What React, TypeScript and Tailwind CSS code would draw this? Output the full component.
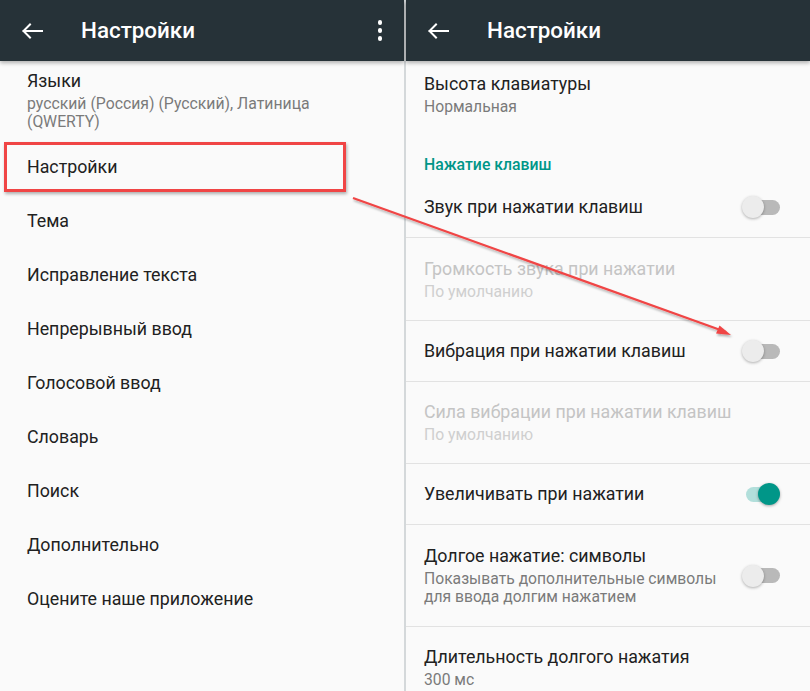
import React from 'react';

const font = { fontFamily: 'Roboto, "Noto Sans", sans-serif' };

const BackArrow = () => (
  <svg width="22" height="16" viewBox="0 0 22 16" className="shrink-0">
    <path d="M21 8H2.5M9 1.5L2.5 8 9 14.5" fill="none" stroke="#fff" strokeWidth="2" strokeLinecap="square" />
  </svg>
);

const Header = ({ menu }: { menu?: boolean }) => (
  <div className="relative z-10 h-[61px] bg-[#263238] flex items-center pl-[21px] pr-[22px] shadow-[0_2px_4px_rgba(0,0,0,0.3)]">
    <BackArrow />
    <span className="ml-[38px] text-[22.4px] font-medium text-white">Настройки</span>
    {menu && (
      <div className="ml-auto flex flex-col gap-[3.5px] items-center">
        <span className="w-[4.5px] h-[4.5px] rounded-full bg-white" />
        <span className="w-[4.5px] h-[4.5px] rounded-full bg-white" />
        <span className="w-[4.5px] h-[4.5px] rounded-full bg-white" />
      </div>
    )}
  </div>
);

const Switch = ({ on }: { on?: boolean }) =>
  on ? (
    <div className="relative w-[36px] h-[22px] flex items-center">
      <div className="ml-[2px] w-[30px] h-[15px] rounded-full bg-[#b2dfdb]" />
      <div className="absolute right-0 w-[22px] h-[22px] rounded-full bg-[#009688] shadow-[0_1px_3px_rgba(0,0,0,0.35)]" />
    </div>
  ) : (
    <div className="relative w-[38px] h-[22px] flex items-center">
      <div className="ml-[4px] w-[34px] h-[15px] rounded-full bg-[#b9b9b9]" />
      <div className="absolute left-0 w-[22px] h-[22px] rounded-full bg-[#ececec] shadow-[0_1px_3px_rgba(0,0,0,0.3)]" />
    </div>
  );

const LeftItem = ({ title }: { title: string }) => (
  <div className="h-[54px] flex items-center px-[27px] text-[17.8px] text-[#212121]">{title}</div>
);

type Row = { title: string; sub?: string[]; h: string; disabled?: boolean; sw?: 'on' | 'off' };

const rows: Row[] = [
  { title: 'Звук при нажатии клавиш', h: 'h-[61px]', sw: 'off' },
  { title: 'Громкость звука при нажатии', sub: ['По умолчанию'], h: 'h-[83px]', disabled: true },
  { title: 'Вибрация при нажатии клавиш', h: 'h-[61px]', sw: 'off' },
  { title: 'Сила вибрации при нажатии клавиш', sub: ['По умолчанию'], h: 'h-[82px]', disabled: true },
  { title: 'Увеличивать при нажатии', h: 'h-[61px]', sw: 'on' },
  {
    title: 'Долгое нажатие: символы',
    sub: ['Показывать дополнительные символы', 'для ввода долгим нажатием'],
    h: 'h-[102px]',
    sw: 'off',
  },
];

const RightRow = ({ r }: { r: Row }) => (
  <div className={`${r.h} border-b border-[#e2e2e2] flex items-center pl-[18px] pr-[30px]`}>
    <div className="flex-1 flex flex-col">
      <div className={`text-[17.8px] leading-[22px] ${r.disabled ? 'text-[#c4c4c4]' : 'text-[#212121]'}`}>{r.title}</div>
      {r.sub && (
        <div className={`mt-[3px] text-[15.7px] leading-[18px] ${r.disabled ? 'text-[#cfcfcf]' : 'text-[#7a7a7a]'}`}>
          {r.sub.map((s) => (
            <div key={s}>{s}</div>
          ))}
        </div>
      )}
    </div>
    {r.sw && <Switch on={r.sw === 'on'} />}
  </div>
);

export default function App() {
  return (
    <div className="relative w-[810px] h-[691px] overflow-hidden flex bg-[#fafafa]" style={font}>
      {/* Left panel */}
      <div className="w-[404px] flex flex-col">
        <Header menu />
        <div className="flex flex-col">
          <div className="h-[79px] px-[27px] pt-[9px]">
            <div className="text-[17.8px] leading-[22px] text-[#212121]">Языки</div>
            <div className="mt-[3px] text-[15.8px] leading-[18px] text-[#7a7a7a]">
              русский (Россия) (Русский), Латиница
              <br />
              (QWERTY)
            </div>
          </div>
          {[
            'Настройки',
            'Тема',
            'Исправление текста',
            'Непрерывный ввод',
            'Голосовой ввод',
            'Словарь',
            'Поиск',
            'Дополнительно',
            'Оцените наше приложение',
          ].map((t) => (
            <LeftItem key={t} title={t} />
          ))}
        </div>
      </div>

      <div className="w-[2px] bg-[#d4d8da]" />

      {/* Right panel */}
      <div className="flex-1 flex flex-col">
        <Header />
        <div className="h-[74px] pl-[18px] pt-[12px]">
          <div className="text-[17.8px] leading-[22px] text-[#212121]">Высота клавиатуры</div>
          <div className="mt-[3px] text-[15.7px] leading-[18px] text-[#7a7a7a]">Нормальная</div>
        </div>
        <div className="h-[42px] pl-[18px] pt-[21px] text-[15.8px] leading-[18px] font-medium text-[#009688]">Нажатие клавиш</div>
        {rows.map((r) => (
          <RightRow key={r.title} r={r} />
        ))}
        <div className="pl-[18px] pt-[19px]">
          <div className="text-[17.8px] leading-[22px] text-[#212121]">Длительность долгого нажатия</div>
          <div className="mt-[3px] text-[15.7px] leading-[18px] text-[#7a7a7a]">300 мс</div>
        </div>
      </div>

      {/* Annotation: red box */}
      <div className="absolute left-[4px] top-[142px] w-[342px] h-[50px] border-[3px] border-[#f04545] shadow-[1px_2px_3px_rgba(0,0,0,0.3)]" />

      {/* Annotation: arrow */}
      <svg className="absolute left-0 top-0 pointer-events-none" width="810" height="691" viewBox="0 0 810 691">
        <defs>
          <filter id="sh" x="-10%" y="-10%" width="120%" height="120%">
            <feDropShadow dx="1" dy="2" stdDeviation="1.2" floodColor="#000" floodOpacity="0.3" />
          </filter>
        </defs>
        <g filter="url(#sh)">
          <line x1="353" y1="198" x2="726" y2="332" stroke="#f04545" strokeWidth="2.2" />
          <path d="M731 335 L716 333.5 L719.5 325.5 Z" fill="#f04545" />
        </g>
      </svg>
    </div>
  );
}
